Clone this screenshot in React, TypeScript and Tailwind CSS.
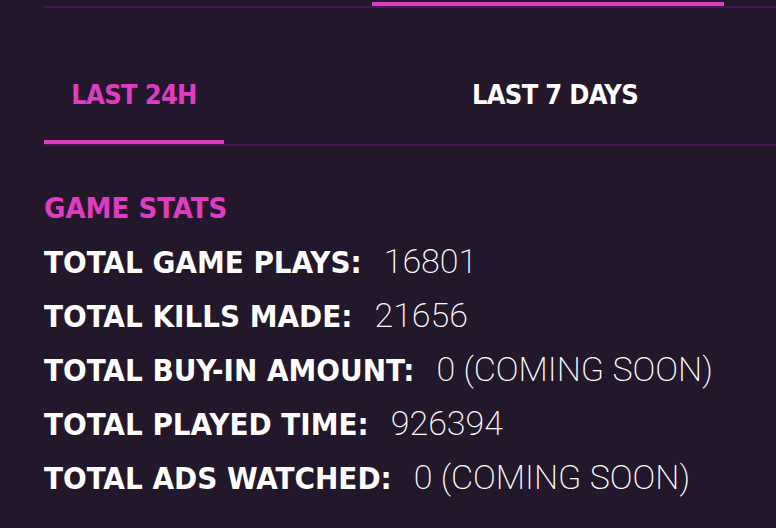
import React, { useState } from 'react'

const stats = [
  { label: 'TOTAL GAME PLAYS:', value: '16801' },
  { label: 'TOTAL KILLS MADE:', value: '21656' },
  { label: 'TOTAL BUY-IN AMOUNT:', value: '0 (COMING SOON)' },
  { label: 'TOTAL PLAYED TIME:', value: '926394' },
  { label: 'TOTAL ADS WATCHED:', value: '0 (COMING SOON)' },
]

const font = { fontFamily: '"DejaVu Sans Condensed", "Roboto", sans-serif' }

export default function App() {
  const [tab, setTab] = useState<'24h' | '7d'>('24h')

  return (
    <div className="min-h-[528px] w-[776px] overflow-hidden bg-[#23172b] pl-[44px]" style={font}>
      {/* upper tab indicator */}
      <div className="pt-[2px]">
        <div className="ml-[328px] h-[4px] w-[352px] bg-[#e03cc2]" />
      </div>
      <div className="h-[2px] bg-[#47194c]" />

      {/* period tabs */}
      <div className="flex">
        <button
          onClick={() => setTab('24h')}
          className="flex w-[180px] shrink-0 flex-col"
        >
          <span
            className={`flex h-[132px] items-center justify-center whitespace-nowrap pt-[40px] text-[27px] font-bold leading-none tracking-tight ${
              tab === '24h' ? 'text-[#e03cc2]' : 'text-white'
            }`}
          >
            LAST 24H
          </span>
          <span className={`h-[4px] w-full ${tab === '24h' ? 'bg-[#e03cc2]' : ''}`} />
        </button>
        <button
          onClick={() => setTab('7d')}
          className="flex w-[662px] shrink-0 flex-col"
        >
          <span
            className={`flex h-[132px] items-center justify-center whitespace-nowrap pt-[40px] text-[27px] font-bold leading-none tracking-tight ${
              tab === '7d' ? 'text-[#e03cc2]' : 'text-white'
            }`}
          >
            LAST 7 DAYS
          </span>
          <span className={`h-[4px] w-full ${tab === '7d' ? 'bg-[#e03cc2]' : ''}`} />
        </button>
      </div>
      <div className="h-[2px] bg-[#47194c]" />

      {/* stats */}
      <div className="pt-[44px]">
        <h2 className="text-[29px] font-bold leading-[36px] text-[#e03cc2]">GAME STATS</h2>
        <div className="mt-[17px] flex flex-col gap-[18px]">
          {stats.map((s) => (
            <div key={s.label} className="flex h-[36px] items-baseline leading-[36px] text-white">
              <span className="text-[31px] font-bold">{s.label}</span>
              <span className="ml-[22px] text-[34px]" style={{ fontFamily: 'Roboto, sans-serif', fontWeight: 200 }}>
                {s.value}
              </span>
            </div>
          ))}
        </div>
      </div>
    </div>
  )
}
